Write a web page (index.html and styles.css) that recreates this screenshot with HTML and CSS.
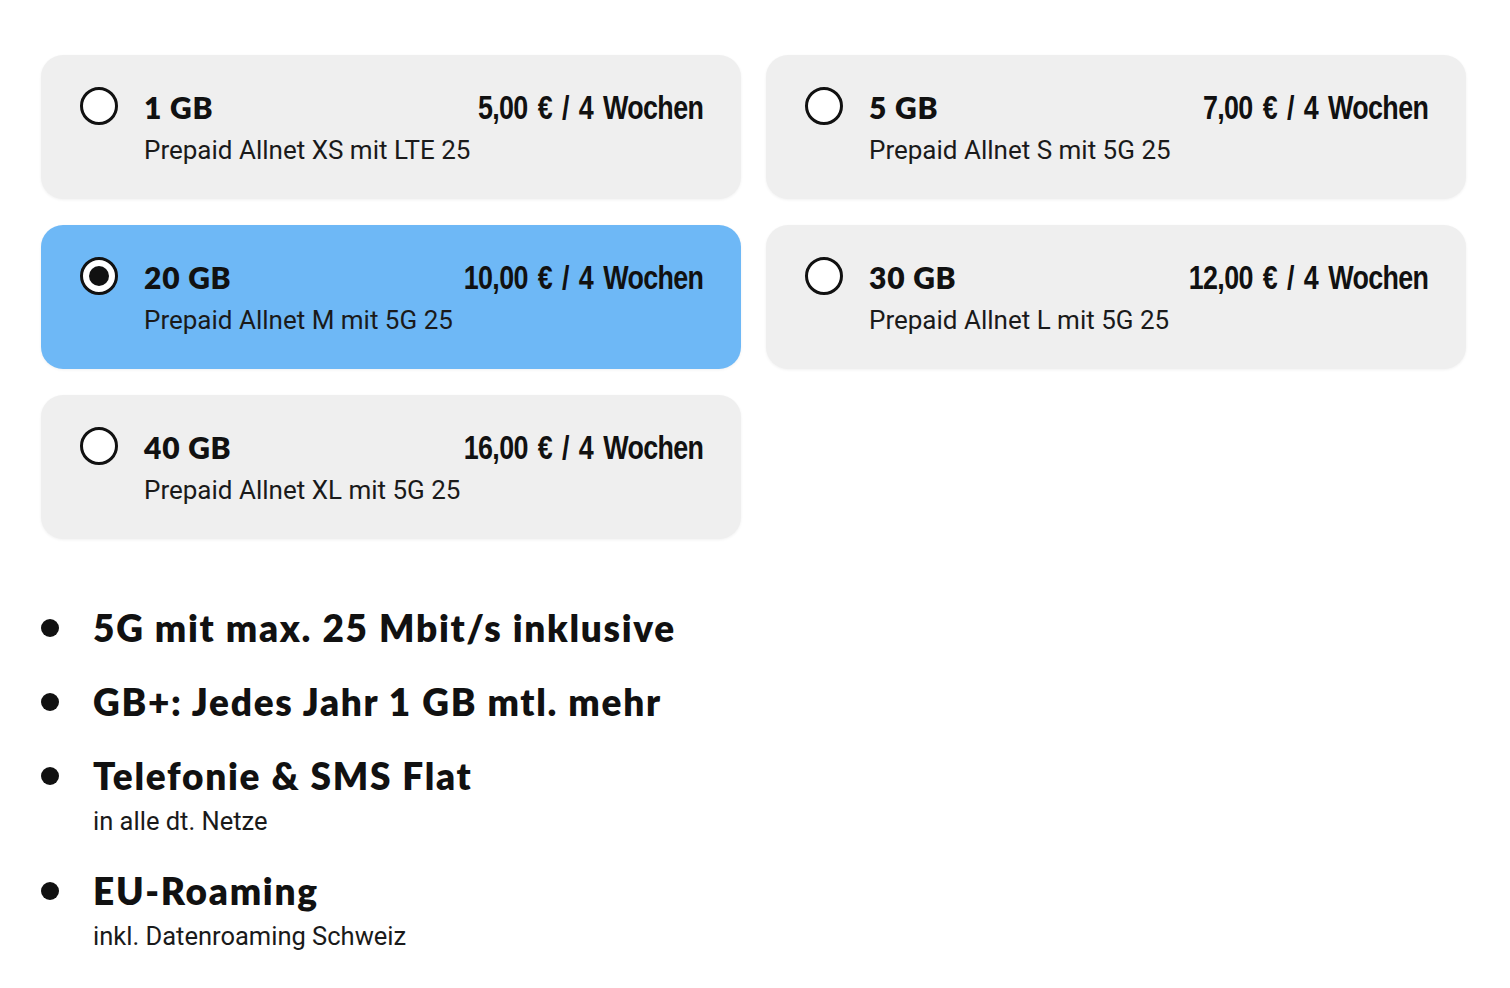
FILE: index.html
```html
<!DOCTYPE html>
<html lang="de">
<head>
<meta charset="utf-8">
<title>Tarife</title>
<link rel="stylesheet" href="styles.css">
</head>
<body>
<main class="page">
  <div class="plans">
    <div class="card">
      <span class="radio"></span>
      <div class="info">
        <div class="top"><span class="gb">1 GB</span><span class="price">5,00 € / 4 Wochen</span></div>
        <div class="name">Prepaid Allnet XS mit LTE 25</div>
      </div>
    </div>
    <div class="card">
      <span class="radio"></span>
      <div class="info">
        <div class="top"><span class="gb">5 GB</span><span class="price">7,00 € / 4 Wochen</span></div>
        <div class="name">Prepaid Allnet S mit 5G 25</div>
      </div>
    </div>
    <div class="card selected">
      <span class="radio checked"></span>
      <div class="info">
        <div class="top"><span class="gb">20 GB</span><span class="price">10,00 € / 4 Wochen</span></div>
        <div class="name">Prepaid Allnet M mit 5G 25</div>
      </div>
    </div>
    <div class="card">
      <span class="radio"></span>
      <div class="info">
        <div class="top"><span class="gb">30 GB</span><span class="price">12,00 € / 4 Wochen</span></div>
        <div class="name">Prepaid Allnet L mit 5G 25</div>
      </div>
    </div>
    <div class="card">
      <span class="radio"></span>
      <div class="info">
        <div class="top"><span class="gb">40 GB</span><span class="price">16,00 € / 4 Wochen</span></div>
        <div class="name">Prepaid Allnet XL mit 5G 25</div>
      </div>
    </div>
  </div>

  <ul class="features">
    <li class="feature"><span class="dot"></span><div><div class="f-title">5G mit max. 25 Mbit/s inklusive</div></div></li>
    <li class="feature"><span class="dot"></span><div><div class="f-title">GB+: Jedes Jahr 1 GB mtl. mehr</div></div></li>
    <li class="feature"><span class="dot"></span><div><div class="f-title">Telefonie &amp; SMS Flat</div><div class="f-sub">in alle dt. Netze</div></div></li>
    <li class="feature"><span class="dot"></span><div><div class="f-title">EU-Roaming</div><div class="f-sub">inkl. Datenroaming Schweiz</div></div></li>
  </ul>
</main>
</body>
</html>
```

FILE: styles.css
```css
* { box-sizing: border-box; }
html, body { margin: 0; padding: 0; background: #ffffff; }
body { font-family: "Lato", "Open Sans", sans-serif; color: #111111; }

.page { padding: 55px 45px 0 41px; }

.plans {
  display: grid;
  grid-template-columns: 700px 700px;
  column-gap: 25px;
  row-gap: 26px;
}

.card {
  height: 144px;
  border-radius: 22px;
  background: #efefef;
  box-shadow: 0 1px 3px rgba(0,0,0,0.06);
  display: flex;
  align-items: flex-start;
  padding: 32px 38px 0 39px;
  gap: 26px;
}
.card.selected { background: #6eb8f6; }

.radio {
  flex: 0 0 38px;
  width: 38px;
  height: 38px;
  border: 3px solid #111;
  border-radius: 50%;
  background: #fff;
  position: relative;
}
.radio.checked::after {
  content: "";
  position: absolute;
  left: 6px; top: 6px;
  width: 20px; height: 20px;
  border-radius: 50%;
  background: #111;
}

.info { flex: 1; display: flex; flex-direction: column; }
.top {
  display: flex;
  justify-content: space-between;
  align-items: baseline;
  height: 40px;
  line-height: 40px;
}
.gb { font-family: "Lato", sans-serif; font-weight: 800; font-size: 30px; letter-spacing: 0.8px; }
.price {
  display: inline-block;
  font-family: "Liberation Sans", "Arial", sans-serif;
  font-weight: 700;
  font-size: 34px;
  letter-spacing: -0.8px;
  word-spacing: 4px;
  transform: scaleX(0.79);
  transform-origin: right center;
  white-space: nowrap;
}
.name {
  margin-top: 8px;
  font-family: "Roboto", sans-serif;
  font-weight: 400;
  font-size: 26px;
  line-height: 30px;
  color: #1a1a1a;
}

.features {
  list-style: none;
  margin: 0;
  padding: 0;
  margin-top: 67px;
  display: flex;
  flex-direction: column;
  gap: 30px;
}
.feature { display: flex; align-items: flex-start; gap: 34px; }
.dot {
  flex: 0 0 18px;
  width: 18px; height: 18px;
  border-radius: 50%;
  background: #111;
  margin-top: 13px;
}
.f-title {
  font-family: "Lato", sans-serif;
  font-weight: 800;
  font-size: 37px;
  line-height: 44px;
  letter-spacing: 1.7px;
}
.f-sub {
  font-family: "Roboto", sans-serif;
  font-size: 25.5px;
  line-height: 30px;
  margin-top: 8px;
  margin-bottom: 3px;
  color: #1a1a1a;
}
```
